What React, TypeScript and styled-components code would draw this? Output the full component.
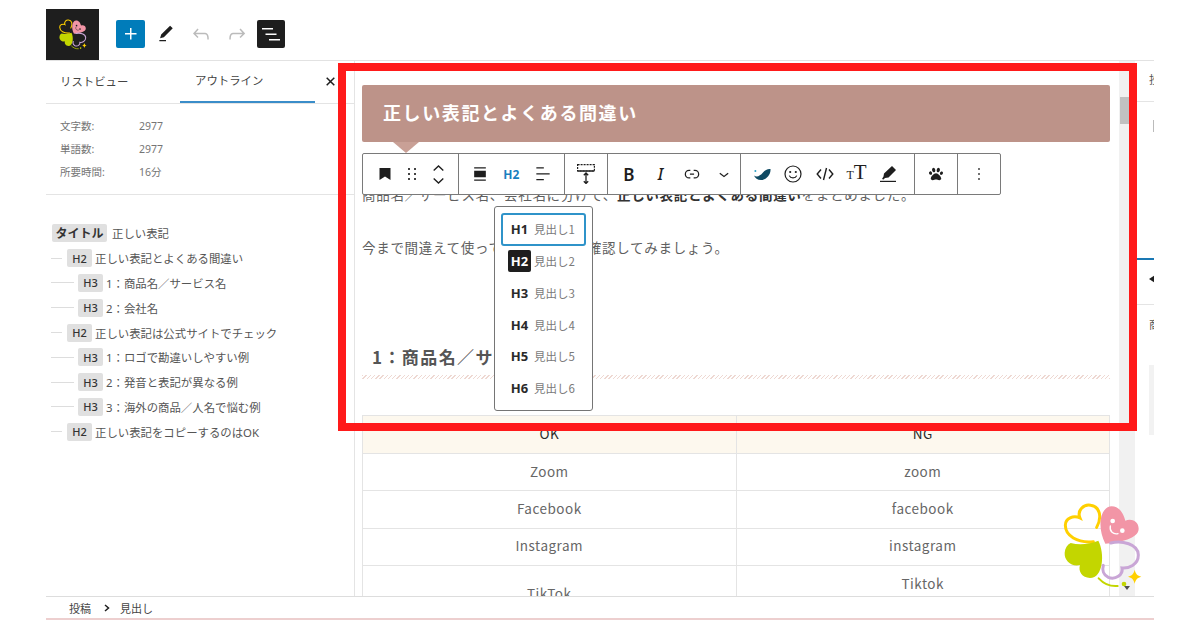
import React from "react";
import styled, { createGlobalStyle } from "styled-components";
import { FaPaw } from "react-icons/fa";

const Global = createGlobalStyle`
  html, body { margin: 0; padding: 0; background: #fff; }
  body { font-family: "Noto Sans", "Noto Sans CJK JP", sans-serif; }
`;

const Page = styled.div`
  position: relative;
  width: 1200px;
  height: 630px;
  overflow: hidden;
  background: #fff;
`;
const Frame = styled.div`
  width: 1108px;
  height: 620px;
  margin-left: 46px;
  padding-top: 9px;
  box-sizing: border-box;
  display: flex;
  flex-direction: column;
  color: #555;
  background: #fff;
`;
const TopBar = styled.header`
  height: 52px;
  flex: none;
  box-sizing: border-box;
  display: flex;
  align-items: flex-start;
  border-bottom: 1px solid #e2e2e2;
`;
const LogoTile = styled.div`
  width: 53px;
  height: 51px;
  background: #1e1e1e;
  display: flex;
  align-items: center;
  justify-content: center;
  margin-right: 17px;
`;
const TopButton = styled.div<{ $bg?: string; $color?: string; $w?: number }>`
  width: ${(p) => p.$w ?? 28}px;
  height: 28px;
  margin-top: 11px;
  border-radius: 2px;
  flex: none;
  display: flex;
  align-items: center;
  justify-content: center;
  background: ${(p) => p.$bg ?? "transparent"};
  color: ${(p) => p.$color ?? "#1e1e1e"};
`;
const Body = styled.div`
  flex: 1;
  min-height: 0;
  display: flex;
`;
const Sidebar = styled.aside`
  width: 309px;
  flex: none;
  box-sizing: border-box;
  border-right: 1px solid #e4e4e4;
  display: flex;
  flex-direction: column;
`;
const Tabs = styled.div`
  height: 42px;
  flex: none;
  display: flex;
  border-bottom: 1px solid #e4e4e4;
  font-size: 11.4px;
  color: #444;
`;
const Tab = styled.div<{ $active?: boolean; $w: number; $pad: number }>`
  width: ${(p) => p.$w}px;
  height: 42px;
  box-sizing: border-box;
  padding-left: ${(p) => p.$pad}px;
  padding-bottom: 2px;
  display: flex;
  align-items: center;
  border-bottom: ${(p) => (p.$active ? "2px solid #3a8dc9" : "0")};
`;
const Close = styled.div`
  width: 30px;
  padding-bottom: 2px;
  display: flex;
  align-items: center;
  justify-content: center;
  color: #1e1e1e;
`;
const Stats = styled.div`
  height: 91px;
  flex: none;
  box-sizing: border-box;
  padding-top: 11px;
  border-bottom: 1px solid #e4e4e4;
  display: grid;
  grid-template-columns: 79px 1fr;
  grid-auto-rows: 23px;
  padding-left: 14px;
  font-size: 10.5px;
  line-height: 23px;
  color: #757575;
`;
const Outline = styled.div`
  padding: 26px 0 0 5px;
  display: flex;
  flex-direction: column;
  font-size: 11.4px;
  color: #555;
`;
const OutlineRow = styled.div`
  height: 24.8px;
  display: flex;
  align-items: center;
`;
const Dash = styled.span<{ $w: number; $gap: number }>`
  width: ${(p) => p.$w}px;
  margin-right: ${(p) => p.$gap}px;
  height: 1px;
  background: #ddd;
  flex: none;
`;
const LevelBadge = styled.span<{ $title?: boolean }>`
  display: inline-flex;
  align-items: center;
  justify-content: center;
  height: 18px;
  width: ${(p) => (p.$title ? 55 : 25)}px;
  margin-right: ${(p) => (p.$title ? 5 : 3)}px;
  margin-left: ${(p) => (p.$title ? 1 : 0)}px;
  border-radius: 2px;
  background: #e0e0e0;
  font-size: ${(p) => (p.$title ? 12 : 11)}px;
  font-weight: ${(p) => (p.$title ? 700 : 500)};
  color: #333;
  flex: none;
`;
const Canvas = styled.main`
  position: relative;
  width: 764px;
  flex: none;
  box-sizing: border-box;
  padding: 24px 9px 0 7px;
  overflow: hidden;
  font-family: "Noto Sans CJK JP", sans-serif;
  font-size: 13.5px;
  letter-spacing: 0.7px;
  color: #5f5f5f;
`;
const Banner = styled.h2`
  position: relative;
  margin: 0;
  height: 57px;
  box-sizing: border-box;
  padding: 0 0 4px 21px;
  display: flex;
  align-items: center;
  background: #bd9389;
  border-radius: 2px;
  color: #fff;
  font-size: 18px;
  letter-spacing: 1.6px;
  font-weight: 700;
  &::after {
    content: "";
    position: absolute;
    left: 31px;
    top: 57px;
    border-left: 13px solid transparent;
    border-right: 13px solid transparent;
    border-top: 11px solid #c9a096;
  }
`;
const Para = styled.p<{ $top: number }>`
  margin: ${(p) => p.$top}px 0 0;
  line-height: 20px;
  white-space: nowrap;
  b { color: #333; }
`;
const SubHead = styled.h3`
  margin: 88px 0 0;
  height: 34px;
  padding-left: 10px;
  box-sizing: border-box;
  font-size: 17px;
  letter-spacing: 1.4px;
  line-height: 24px;
  font-weight: 700;
  color: #555;
  background: repeating-linear-gradient(-45deg, #eed8d2 0 1px, #fff 1px 3px) left bottom / 100% 4px no-repeat;
`;
const Table = styled.table`
  margin-top: 36px;
  width: 748px;
  table-layout: fixed;
  border-collapse: collapse;
  font-size: 13.5px;
  letter-spacing: 0.5px;
  text-align: center;
  th, td {
    border: 1px solid #e4e4e4;
    padding: 6.5px 8px 9.5px;
    line-height: 20px;
    box-sizing: border-box;
  }
  th {
    height: 38px;
    padding-top: 7px;
    background: #fdf8ee;
    color: #2a2a2a;
    font-weight: 400;
  }
  td { height: 37.4px; color: #666; }
`;
const Scrollbar = styled.div`
  width: 16px;
  flex: none;
  position: relative;
  background: #f1f1f1;
`;
const Thumb = styled.div`
  position: absolute;
  left: 1px;
  top: 36px;
  width: 12px;
  height: 27px;
  background: #c1c1c1;
`;
const ScrollArrow = styled.div`
  position: absolute;
  left: 5px;
  bottom: 6px;
  border-left: 3px solid transparent;
  border-right: 3px solid transparent;
  border-top: 4px solid #505050;
`;
const RightRail = styled.aside`
  width: 19px;
  flex: none;
  display: flex;
  flex-direction: column;
  overflow: hidden;
  font-size: 11px;
  color: #555;
`;
const RailTab = styled.div`
  height: 41px;
  flex: none;
  box-sizing: border-box;
  border-bottom: 1px solid #e4e4e4;
  padding-left: 14px;
  line-height: 38px;
  white-space: nowrap;
`;
const RailMark = styled.div`
  width: 1px;
  height: 12px;
  margin: 18px 0 0 18px;
  background: #bbb;
  flex: none;
`;
const RailBlue = styled.div`
  height: 2px;
  margin-top: 126px;
  background: #1a78b4;
  flex: none;
`;
const RailRow = styled.div`
  height: 45px;
  flex: none;
  box-sizing: border-box;
  border-bottom: 1px solid #e4e4e4;
  padding: 15px 0 0 14px;
  color: #1e1e1e;
  display: flex;
  align-items: flex-start;
`;
const RailCaption = styled.div`
  padding: 11px 0 0 14px;
  height: 48px;
  flex: none;
  box-sizing: border-box;
  white-space: nowrap;
`;
const RailBlock = styled.div`
  margin: 12px 0 0 14px;
  height: 70px;
  background: #f2f2f2;
  flex: none;
`;
const Footer = styled.footer`
  height: 24px;
  flex: none;
  box-sizing: border-box;
  border-top: 1px solid #ddd;
  border-bottom: 2px solid #edcfcf;
  padding-left: 23px;
  display: flex;
  align-items: center;
  font-size: 11px;
  color: #444;
`;
const Crumb = styled.span`
  display: inline-flex;
  align-items: center;
`;
const CrumbSep = styled.svg`
  margin: 0 10px 0 13px;
`;
const Toolbar = styled.div`
  position: absolute;
  left: 7px;
  top: 92px;
  height: 42px;
  box-sizing: border-box;
  display: flex;
  background: #fff;
  border: 1px solid #7a7a7a;
  border-radius: 2px;
  z-index: 2;
  letter-spacing: 0;
`;
const ToolGroup = styled.div<{ $w: number; $pad?: number; $last?: boolean }>`
  width: ${(p) => p.$w}px;
  box-sizing: border-box;
  padding-left: ${(p) => p.$pad ?? 0}px;
  display: flex;
  align-items: center;
  justify-content: ${(p) => (p.$pad === undefined ? "center" : "flex-start")};
  border-right: ${(p) => (p.$last ? "0" : "1px solid #7a7a7a")};
`;
const ToolBtn = styled.div<{ $w?: number; $color?: string }>`
  width: ${(p) => p.$w ?? 31.6}px;
  height: 40px;
  flex: none;
  display: flex;
  align-items: center;
  justify-content: center;
  color: ${(p) => p.$color ?? "#1e1e1e"};
`;
const StackBtn = styled(ToolBtn)`
  flex-direction: column;
  gap: 7px;
`;
const HeadGlyph = styled.span`
  font: 700 12px "Noto Sans", sans-serif;
  color: #1a7fc0;
`;
const BoldGlyph = styled.span`
  font: 600 17px "Noto Sans", sans-serif;
`;
const ItalicGlyph = styled.span`
  font: italic 500 16px "Noto Sans", sans-serif;
`;
const SerifGlyph = styled.span`
  font-family: "Liberation Serif", serif;
  display: inline-flex;
  align-items: baseline;
  line-height: 1;
  margin-top: -3px;
`;
const SmallT = styled.span`
  font-size: 12px;
`;
const LargeT = styled.span`
  font-size: 21px;
`;
const Menu = styled.div`
  position: absolute;
  left: 139px;
  top: 145px;
  width: 99px;
  height: 205px;
  box-sizing: border-box;
  background: #fff;
  border: 1px solid #757575;
  border-radius: 3px;
  padding: 5.5px 6px;
  z-index: 3;
  letter-spacing: 0;
`;
const MenuItem = styled.div<{ $focus?: boolean }>`
  height: ${(p) => (p.$focus ? 33 : 31.7)}px;
  box-sizing: border-box;
  display: flex;
  align-items: center;
  padding-left: ${(p) => (p.$focus ? 5 : 6)}px;
  border-radius: 3px;
  border: ${(p) => (p.$focus ? "2px solid #2f93c9" : "0")};
  margin-left: ${(p) => (p.$focus ? 0 : 1)}px;
  color: #7a7a7a;
  font-size: 11.5px;
`;
const LevelTag = styled.span<{ $on?: boolean }>`
  width: 23px;
  height: 22px;
  margin-right: 3px;
  border-radius: 2px;
  flex: none;
  display: flex;
  align-items: center;
  justify-content: center;
  font: 700 13px "Noto Sans", sans-serif;
  background: ${(p) => (p.$on ? "#1e1e1e" : "transparent")};
  color: ${(p) => (p.$on ? "#fff" : "#2a2a2a")};
`;
const RedFrame = styled.div`
  position: absolute;
  left: 338px;
  top: 63px;
  width: 799px;
  height: 368px;
  box-sizing: border-box;
  border: 8px solid #ff1a1a;
  z-index: 5;
`;
const Brand = styled.svg`
  position: absolute;
  left: 1040px;
  top: 490px;
  z-index: 6;
`;

const I = ({ d, s = 24, fill = "currentColor" }: { d: string; s?: number; fill?: string }) => (
  <svg width={s} height={s} viewBox="0 0 24 24" fill={fill} aria-hidden>
    <path d={d} />
  </svg>
);

const Clover = ({ tile }: { tile?: boolean }) => (
  <>
    <path d="M160 155C112 160 76 137 76 106C76 85 100 75 120 84C110 60 132 42 152 46C178 50 188 78 170 112" fill="none" stroke="#ffd000" strokeWidth="9" strokeLinecap="round" />
    <path d="M196 161C170 112 180 50 215 49C238 49 250 70 256 92C272 84 296 92 296 116C296 146 240 156 196 161Z" fill="#f295a6" />
    <circle cx="218" cy="93" r="7" fill={tile ? "#1e1e1e" : "#fff"} />
    <circle cx="247" cy="122" r="7" fill={tile ? "#1e1e1e" : "#fff"} />
    <path d="M211 108C208 125 220 134 234 131" fill="none" stroke={tile ? "#1e1e1e" : "#fff"} strokeWidth="4" strokeLinecap="round" />
    <path d="M92 159C120 166 150 162 175 152C195 190 190 264 150 264C126 263 114 244 120 225C96 232 72 212 74 188C75 174 82 164 92 159Z" fill="#c3d600" />
    <path d="M212 159C245 150 295 162 295 195C295 225 265 236 246 234C250 255 226 270 205 262C190 255 186 240 190 226" fill="none" stroke="#c9a6d6" strokeWidth="9" strokeLinecap="round" />
    <path d="M176 265C190 280 212 290 233 288" fill="none" stroke="#c3d600" strokeWidth="6" strokeLinecap="round" />
    <circle cx="252" cy="282" r="7" fill="#c3d600" />
    <path d="M284 239C287 252 292 257 304 260C292 263 287 268 284 281C281 268 276 263 264 260C276 257 281 252 284 239Z" fill="#ffd000" />
  </>
);

type Row = { lv: string; text: string };
const rows: Row[] = [
  { lv: "H2", text: "正しい表記とよくある間違い" },
  { lv: "H3", text: "1：商品名／サービス名" },
  { lv: "H3", text: "2：会社名" },
  { lv: "H2", text: "正しい表記は公式サイトでチェック" },
  { lv: "H3", text: "1：ロゴで勘違いしやすい例" },
  { lv: "H3", text: "2：発音と表記が異なる例" },
  { lv: "H3", text: "3：海外の商品／人名で悩む例" },
  { lv: "H2", text: "正しい表記をコピーするのはOK" },
];
const levels = [1, 2, 3, 4, 5, 6];

export default function App() {
  return (
    <Page>
      <Global />
      <Frame>
        <TopBar>
          <LogoTile>
            <svg width="28" height="31" viewBox="70 40 236 255" aria-hidden>
              <Clover tile />
            </svg>
          </LogoTile>
          <TopButton $w={29} $bg="#007cba" $color="#fff">
            <I d="M11 12.5V17.5H12.5V12.5H17.5V11H12.5V6H11V11H6V12.5H11Z" />
          </TopButton>
          <TopButton $w={41}>
            <I s={20} d="M20.1 5.1L16.9 2 6.2 12.7l-1.3 4.4 4.5-1.3L20.1 5.1zM4 20.8h8v-1.5H4v1.5z" />
          </TopButton>
          <TopButton $w={30} $color="#bbb">
            <I d="M18.3 11.7c-.6-.6-1.4-.9-2.3-.9H6.7l2.9-3.3-1.1-1-4.5 5L8.5 16l1-1-2.7-2.7H16c.5 0 .9.2 1.3.5 1 1 1 3.4 1 4.5v.3h1.5v-.2c0-1.5 0-4.3-1.5-5.7z" />
          </TopButton>
          <TopButton $w={41} $color="#bbb">
            <I d="M15.6 6.5l-1.1 1 2.9 3.3H8c-.9 0-1.7.3-2.3.9-1.4 1.5-1.4 4.2-1.4 5.6v.2h1.5v-.3c0-1.1 0-3.5 1-4.5.3-.3.7-.5 1.3-.5h9.2L14.5 15l1.1 1.1 4.6-4.6-4.6-5z" />
          </TopButton>
          <TopButton $bg="#1e1e1e" $color="#fff">
            <I d="M3 6h11v1.5H3V6Zm3.5 5.5h11V13h-11v-1.5ZM21 17H10v1.5h11V17Z" />
          </TopButton>
        </TopBar>
        <Body>
          <Sidebar>
            <Tabs>
              <Tab $w={134} $pad={14}>リストビュー</Tab>
              <Tab $w={135} $pad={15} $active>アウトライン</Tab>
              <Close>
                <svg width="9" height="9" viewBox="0 0 9 9" aria-hidden>
                  <path d="M.7.7l7.6 7.6M8.3.7.7 8.3" fill="none" stroke="currentColor" strokeWidth="1.5" />
                </svg>
              </Close>
            </Tabs>
            <Stats>
              <span>文字数:</span><span>2977</span>
              <span>単語数:</span><span>2977</span>
              <span>所要時間:</span><span>16分</span>
            </Stats>
            <Outline>
              <OutlineRow>
                <LevelBadge $title>タイトル</LevelBadge>正しい表記
              </OutlineRow>
              {rows.map((r, i) => (
                <OutlineRow key={i}>
                  <Dash $w={r.lv === "H2" ? 11 : 23} $gap={r.lv === "H2" ? 5 : 4} />
                  <LevelBadge>{r.lv}</LevelBadge>
                  {r.text}
                </OutlineRow>
              ))}
            </Outline>
          </Sidebar>
          <Canvas>
            <Banner>正しい表記とよくある間違い</Banner>
            <Para $top={42}>商品名／サービス名、会社名に分けて、<b>正しい表記とよくある間違い</b>をまとめました。</Para>
            <Para $top={33}>今まで間違えて使っていなかったか確認してみましょう。</Para>
            <SubHead>1：商品名／サービス名</SubHead>
            <Table>
              <thead>
                <tr><th>OK</th><th>NG</th></tr>
              </thead>
              <tbody>
                <tr><td>Zoom</td><td>zoom</td></tr>
                <tr><td>Facebook</td><td>facebook</td></tr>
                <tr><td>Instagram</td><td>instagram</td></tr>
                <tr><td>TikTok</td><td>Tiktok<br />tiktok</td></tr>
              </tbody>
            </Table>
            <Toolbar>
              <ToolGroup $w={96} $pad={9}>
                <ToolBtn $w={26}>
                  <svg width="12" height="12" viewBox="0 0 12 12" aria-hidden><path d="M0.5 0h11v12L6 8.6 0.5 12Z" fill="currentColor" /></svg>
                </ToolBtn>
                <ToolBtn $w={27}>
                  <svg width="8" height="12" viewBox="0 0 8 12" aria-hidden fill="#444">
                    <path d="M0 0h2v2H0zM6 0h2v2H6zM0 5h2v2H0zM6 5h2v2H6zM0 10h2v2H0zM6 10h2v2H6z" />
                  </svg>
                </ToolBtn>
                <StackBtn $w={26}>
                  <svg width="11" height="6" viewBox="0 0 11 6" aria-hidden><path d="M.7 5.4 5.5 1l4.8 4.4" fill="none" stroke="currentColor" strokeWidth="1.4" /></svg>
                  <svg width="11" height="6" viewBox="0 0 11 6" aria-hidden><path d="M.7.6 5.5 5l4.8-4.4" fill="none" stroke="currentColor" strokeWidth="1.4" /></svg>
                </StackBtn>
              </ToolGroup>
              <ToolGroup $w={106} $pad={5}>
                <ToolBtn><I s={20} d="M5 5.5h14V4H5zM5 20h14v-1.5H5zM5 8h14v8H5z" /></ToolBtn>
                <ToolBtn><HeadGlyph>H2</HeadGlyph></ToolBtn>
                <ToolBtn><I s={20} d="M13 5.5H4V4h9v1.5Zm7 7H4V11h16v1.5Zm-7 7H4V18h9v1.5Z" /></ToolBtn>
              </ToolGroup>
              <ToolGroup $w={43}>
                <svg width="18" height="20" viewBox="0 0 18 20" aria-hidden>
                  <path d="M.6.6h16.8v6.4H.6z" fill="none" stroke="#1e1e1e" strokeWidth="1.2" strokeDasharray="2 1" />
                  <path d="M.6 7h16.8" stroke="#1e1e1e" strokeWidth="1.4" />
                  <path d="M9 9v10.5M6.8 11.2 9 9l2.2 2.2M6.8 17.3 9 19.5l2.2-2.2" fill="none" stroke="#1e1e1e" strokeWidth="1.3" />
                </svg>
              </ToolGroup>
              <ToolGroup $w={133} $pad={5}>
                <ToolBtn><BoldGlyph>B</BoldGlyph></ToolBtn>
                <ToolBtn><ItalicGlyph>I</ItalicGlyph></ToolBtn>
                <ToolBtn><I s={20} d="M10 17.389H8.444A5.194 5.194 0 1 1 8.444 7H10v1.5H8.444a3.694 3.694 0 0 0 0 7.389H10v1.5ZM14 7h1.556a5.194 5.194 0 0 1 0 10.39H14v-1.5h1.556a3.694 3.694 0 0 0 0-7.39H14V7Zm-4.5 6h5v-1.5h-5V13Z" /></ToolBtn>
                <ToolBtn><I s={20} d="M17.5 11.6L12 16l-5.5-4.4.9-1.2L12 14l4.5-3.6 1 1.2z" /></ToolBtn>
              </ToolGroup>
              <ToolGroup $w={174} $pad={5}>
                <ToolBtn $color="#0f4a63">
                  <svg width="18" height="13" viewBox="0 0 18 13" aria-hidden>
                    <path d="M1 7.5C4 9.5 7 8 10 4.5C12 2 15 .5 17.5 1C18 6 14 12 8 12C4.5 12 2 10 1 7.5Z" fill="currentColor" />
                    <circle cx="2.4" cy="3" r="1" fill="#2b9fc4" />
                  </svg>
                </ToolBtn>
                <ToolBtn>
                  <svg width="20" height="20" viewBox="0 0 20 20" aria-hidden fill="none" stroke="currentColor">
                    <circle cx="10" cy="10" r="8" strokeWidth="1.2" />
                    <circle cx="7.2" cy="8" r="1.1" fill="currentColor" stroke="none" />
                    <circle cx="12.8" cy="8" r="1.1" fill="currentColor" stroke="none" />
                    <path d="M6.3 11.6C7.5 14.6 12.5 14.6 13.7 11.6" strokeWidth="1.2" />
                  </svg>
                </ToolBtn>
                <ToolBtn>
                  <svg width="18" height="14" viewBox="0 0 18 14" aria-hidden fill="none" stroke="currentColor" strokeWidth="1.4">
                    <path d="M5 2.5 1.2 7 5 11.5M13 2.5 16.8 7 13 11.5M10.5 1 7.5 13" />
                  </svg>
                </ToolBtn>
                <ToolBtn><SerifGlyph><SmallT>T</SmallT><LargeT>T</LargeT></SerifGlyph></ToolBtn>
                <ToolBtn>
                  <svg width="18" height="18" viewBox="0 0 18 18" aria-hidden fill="currentColor">
                    <path d="M13 1 17 5 9.5 12.5 6 13 4.5 14.5 3 14 4.5 11.5 5 8.5Z" />
                    <path d="M1 15.8h16v1.2H1z" />
                  </svg>
                </ToolBtn>
              </ToolGroup>
              <ToolGroup $w={43}><FaPaw size={14} color="#1e1e1e" /></ToolGroup>
              <ToolGroup $w={42} $last><I s={20} d="M13 19h-2v-2h2v2zm0-6h-2v-2h2v2zm0-6h-2V5h2v2z" fill="#1e1e1e" /></ToolGroup>
            </Toolbar>
            <Menu>
              {levels.map((n) => (
                <MenuItem key={n} $focus={n === 1}>
                  <LevelTag $on={n === 2}>H{n}</LevelTag>見出し{n}
                </MenuItem>
              ))}
            </Menu>
          </Canvas>
          <Scrollbar>
            <Thumb />
            <ScrollArrow />
          </Scrollbar>
          <RightRail>
            <RailTab>投稿</RailTab>
            <RailMark />
            <RailBlue />
            <RailRow>
              <svg width="6" height="8" viewBox="0 0 6 8" aria-hidden><path d="M0 4 6 0v8Z" fill="currentColor" /></svg>
            </RailRow>
            <RailCaption>商品</RailCaption>
            <RailBlock />
          </RightRail>
        </Body>
        <Footer>
          <Crumb>投稿</Crumb>
          <CrumbSep width="6" height="8" viewBox="0 0 6 8" aria-hidden>
            <path d="M1 1 4.5 4 1 7" fill="none" stroke="#1e1e1e" strokeWidth="1.5" />
          </CrumbSep>
          <Crumb>見出し</Crumb>
        </Footer>
      </Frame>
      <RedFrame />
      <Brand width="130" height="140" viewBox="0 0 390 420" aria-hidden>
        <Clover />
      </Brand>
    </Page>
  );
}
